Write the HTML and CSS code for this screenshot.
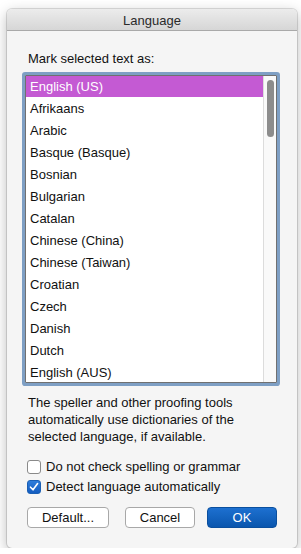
FILE: index.html
```html
<!DOCTYPE html>
<html>
<head>
<meta charset="utf-8">
<title>Language</title>
<link rel="stylesheet" href="styles.css">
</head>
<body>

<div class="window">
   <div class="title_bar">Language</div>

   <div class="content">
      <div class="label">Mark selected text as:</div>

      <div class="list_box">
         <div class="list_rows">
            <div class="row selected">English (US)</div>
            <div class="row">Afrikaans</div>
            <div class="row">Arabic</div>
            <div class="row">Basque (Basque)</div>
            <div class="row">Bosnian</div>
            <div class="row">Bulgarian</div>
            <div class="row">Catalan</div>
            <div class="row">Chinese (China)</div>
            <div class="row">Chinese (Taiwan)</div>
            <div class="row">Croatian</div>
            <div class="row">Czech</div>
            <div class="row">Danish</div>
            <div class="row">Dutch</div>
            <div class="row">English (AUS)</div>
         </div>
         <div class="scroll_track">
            <div class="scroll_thumb"></div>
         </div>
      </div>

      <div class="description">
         The speller and other proofing tools automatically use dictionaries of the
         selected language, if available.
      </div>

      <div class="options">
         <div class="option">
            <span class="check_box"></span>
            Do not check spelling or grammar
         </div>
         <div class="option">
            <span class="check_box checked">
               <svg width="10" height="10" viewBox="0 0 10 10">
                  <path d="M1.5 5.2 L4 7.8 L8.6 1.6" fill="none" stroke="#fff" stroke-width="1.6"
                        stroke-linecap="round" stroke-linejoin="round"/>
               </svg>
            </span>
            Detect language automatically
         </div>
      </div>

      <div class="buttons">
         <button class="push_button default_button">Default...</button>
         <button class="push_button cancel_button">Cancel</button>
         <button class="push_button ok_button">OK</button>
      </div>
   </div>
</div>

</body>
</html>
```

FILE: styles.css
```css
body
{
   margin: 0 ;
   background-color: #ffffff ;
   font-family: "Liberation Sans", Arial, sans-serif ;
   font-size: 13px ;
   color: #111111 ;
}

.window
{
   margin: 9px 0 0 7px ;
   width: 290px ;
   height: 539px ;
   box-sizing: border-box ;
   background-color: #f5f5f5 ;
   border-radius: 5px ;
   box-shadow: 0 0 0 1px rgba( 0, 0, 0, 0.12 ), 0 4px 14px rgba( 0, 0, 0, 0.28 ) ;
   overflow: hidden ;
}

.title_bar
{
   height: 21px ;
   line-height: 23px ;
   text-align: center ;
   color: #2a2a2a ;
   background: linear-gradient( #ececec, #d6d6d6 ) ;
   border-bottom: 1px solid #a9a9a9 ;
}

.content
{
   padding: 20px 18px 0 18px ;
}

.label
{
   height: 16px ;
   line-height: 16px ;
   padding-left: 3px ;
}

/* The list with its blue focus ring */

.list_box
{
   display: flex ;
   margin: 8px 2px 0 0 ;
   height: 308px ;
   box-sizing: border-box ;
   background-color: #ffffff ;
   border: 1px solid #707070 ;
   box-shadow: 0 0 0 3px #7e9fc4 ;
   border-radius: 1px ;
   overflow: hidden ;
}

.list_rows
{
   flex: 1 ;
}

.row
{
   height: 22px ;
   line-height: 22px ;
   padding-left: 4px ;
   white-space: nowrap ;
}

.row.selected
{
   height: 21px ;
   margin-bottom: 1px ;
   background-color: #c45ad3 ;
   color: #ffffff ;
}

.scroll_track
{
   width: 13px ;
   background-color: #f9f9f9 ;
   border-left: 1px solid #dcdcdc ;
   padding: 4px 0 0 3px ;
   box-sizing: border-box ;
}

.scroll_thumb
{
   width: 7px ;
   height: 57px ;
   border-radius: 4px ;
   background-color: #8c8c8c ;
}

.description
{
   margin-top: 11px ;
   padding-left: 3px ;
   line-height: 17px ;
}

.options
{
   display: flex ;
   flex-direction: column ;
   gap: 5px ;
   margin-top: 14px ;
   padding-left: 2px ;
}

.option
{
   display: flex ;
   align-items: center ;
   gap: 5px ;
   height: 15px ;
}

.check_box
{
   width: 14px ;
   height: 14px ;
   box-sizing: border-box ;
   border: 1px solid #8a8a8a ;
   border-radius: 3px ;
   background-color: #ffffff ;
   display: flex ;
   align-items: center ;
   justify-content: center ;
}

.check_box.checked
{
   border-color: #1a5fb4 ;
   background: linear-gradient( #2f7ddb, #135cc0 ) ;
}

.buttons
{
   display: flex ;
   margin-top: 13px ;
   padding-left: 2px ;
}

.push_button
{
   height: 21px ;
   box-sizing: border-box ;
   font-family: "Liberation Sans", Arial, sans-serif ;
   font-size: 13px ;
   color: #111111 ;
   background-color: #ffffff ;
   border: 1px solid #a8a8a8 ;
   border-radius: 4px ;
   padding: 0 ;
}

.default_button
{
   width: 82px ;
}

.cancel_button
{
   width: 70px ;
   margin-left: 16px ;
}

.ok_button
{
   width: 70px ;
   margin-left: 12px ;
   color: #ffffff ;
   border-color: #0a4f9e ;
   background: linear-gradient( #1d70d0, #0a56ae ) ;
}
```
